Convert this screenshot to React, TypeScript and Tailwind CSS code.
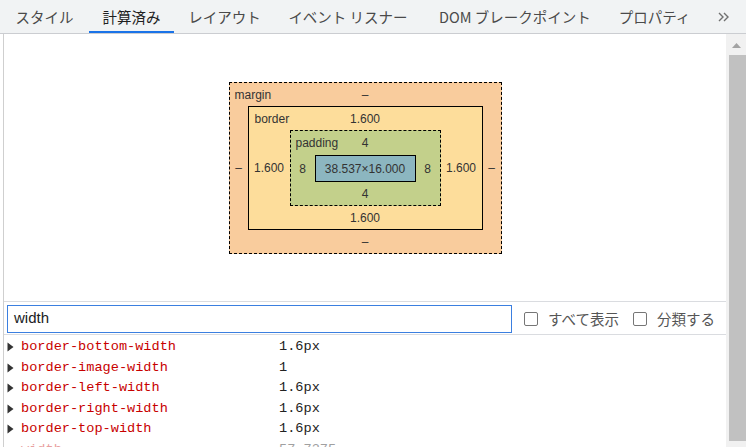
import React from 'react';

const tabs = [
  { label: 'スタイル', w: 'w-[89px]' },
  { label: '計算済み', w: 'w-[85px]', active: true },
  { label: 'レイアウト', w: 'w-[101px]' },
  { label: 'イベント リスナー', w: 'w-[146px]' },
  { label: 'DOM ブレークポイント', w: 'w-[188px]' },
  { label: 'プロパティ', w: 'w-[91px]' },
];

const rows = [
  { name: 'border-bottom-width', value: '1.6px' },
  { name: 'border-image-width', value: '1' },
  { name: 'border-left-width', value: '1.6px' },
  { name: 'border-right-width', value: '1.6px' },
  { name: 'border-top-width', value: '1.6px' },
];

const jp = { fontFamily: '"Noto Sans CJK JP", "Noto Sans", sans-serif' };
const sans = { fontFamily: '"Liberation Sans", Arial, sans-serif' };
const mono = { fontFamily: '"Liberation Mono", "DejaVu Sans Mono", monospace' };

const Triangle = () => (
  <svg width="7" height="10" viewBox="0 0 7 10">
    <path d="M0.5 0.5 L6.5 5 L0.5 9.5 Z" fill="#333" />
  </svg>
);

const Checkbox = ({ label }: { label: string }) => (
  <label className="flex items-center gap-[10px]">
    <span className="w-[14px] h-[14px] rounded-[2px] border border-[#767676] bg-white" />
    <span className="text-[14.5px] text-[#555]" style={jp}>
      {label}
    </span>
  </label>
);

const BoxModel = () => (
  <div className="w-[273px] h-[172px] border border-dashed border-black bg-[#f9cc9d] flex flex-col text-[12px] text-[#333]" style={sans}>
    {/* margin */}
    <div className="h-[23px] relative flex items-center justify-center">
      <span className="absolute left-[5px] text-[#333]">margin</span>
      <span>–</span>
    </div>
    <div className="flex-1 flex">
      <div className="w-[18px] flex items-center justify-center">–</div>
      {/* border */}
      <div className="w-[235px] h-[124px] border border-black bg-[#fddd9b] flex flex-col">
        <div className="h-[23px] relative flex items-center justify-center">
          <span className="absolute left-[6px]">border</span>
          <span>1.600</span>
        </div>
        <div className="flex-1 flex">
          <div className="w-[41px] flex items-center justify-center">1.600</div>
          {/* padding */}
          <div className="w-[151px] h-[76px] border border-dashed border-black bg-[#c3d08b] flex flex-col">
            <div className="h-[24px] relative flex items-center justify-center">
              <span className="absolute left-[5px]">padding</span>
              <span>4</span>
            </div>
            <div className="flex-1 flex">
              <div className="w-[24px] flex items-center justify-center">8</div>
              <div className="w-[101px] h-[27px] border border-black bg-[#8cb6c0] flex items-center justify-center">
                38.537×16.000
              </div>
              <div className="w-[24px] flex items-center justify-center">8</div>
            </div>
            <div className="h-[23px] flex items-center justify-center">4</div>
          </div>
          <div className="w-[41px] flex items-center justify-center">1.600</div>
        </div>
        <div className="h-[23px] flex items-center justify-center">1.600</div>
      </div>
      <div className="w-[18px] flex items-center justify-center">–</div>
    </div>
    <div className="h-[23px] flex items-center justify-center">–</div>
  </div>
);

export default function App() {
  return (
    <div className="w-[750px] h-[447px] overflow-hidden bg-white flex flex-col">
      {/* Tab bar */}
      <div className="w-[746px] h-[34px] shrink-0 bg-[#f1f3f4] border-b border-[#cbcdd1] flex" style={jp}>
        {tabs.map((t) => (
          <div
            key={t.label}
            className={`${t.w} relative flex items-center justify-center text-[14.5px] ${t.active ? 'text-[#1f1f1f]' : 'text-[#4a4a4a]'}`}
          >
            {t.label}
            {t.active && <span className="absolute left-0 right-0 bottom-0 h-[2px] bg-[#1a73e8]" />}
          </div>
        ))}
        <div className="flex items-center pl-[18px]">
          <svg width="11" height="10" viewBox="0 0 11 10" fill="none" stroke="#707070" strokeWidth="1.4">
            <path d="M1 1 L5 5 L1 9" />
            <path d="M6 1 L10 5 L6 9" />
          </svg>
        </div>
      </div>

      {/* Body */}
      <div className="flex flex-1 min-h-0 w-[746px] pl-[3px]">
        <div className="flex-1 min-w-0 border-l border-[#cfcfcf] flex flex-col overflow-hidden">
          <div className="h-[267px] shrink-0 flex justify-center pt-[48px]">
            <BoxModel />
          </div>

          {/* Filter row */}
          <div className="h-[34px] shrink-0 border-y border-[#dadce0] flex items-center pl-[3px] pt-[1px]">
            <div className="w-[505px] h-[28px] border border-[#3b7fe0] flex items-center pl-[6px] text-[15px] text-[#202124]" style={sans}>
              width
            </div>
            <div className="flex items-center gap-[14px] ml-[12px]">
              <Checkbox label="すべて表示" />
              <Checkbox label="分類する" />
            </div>
          </div>

          {/* Property rows */}
          <div className="pt-[2px] text-[13.6px] shrink-0" style={mono}>
            {rows.map((r) => (
              <div key={r.name} className="h-[20.5px] flex items-center">
                <div className="w-[17px] pl-[3px] flex items-center">
                  <Triangle />
                </div>
                <div className="w-[258px] text-[#c80000]">{r.name}</div>
                <div className="text-[#222]">{r.value}</div>
              </div>
            ))}
            <div className="h-[20.5px] flex items-center">
              <div className="w-[17px]" />
              <div className="w-[258px] text-[#e9a0a0]">width</div>
              <div className="text-[#a0a0a0]">57.7375</div>
            </div>
          </div>
        </div>

        {/* Scrollbar */}
        <div className="w-[20px] shrink-0 bg-[#f1f1f1] flex flex-col items-center">
          <div className="h-[21px] w-full flex items-center justify-center pt-[2px]">
            <svg width="9" height="5" viewBox="0 0 9 5">
              <path d="M0 5 L4.5 0 L9 5 Z" fill="#a3a3a3" />
            </svg>
          </div>
          <div className="w-[17px] h-[386px] ml-[2px] bg-[#c1c1c1]" />
        </div>
      </div>
    </div>
  );
}
